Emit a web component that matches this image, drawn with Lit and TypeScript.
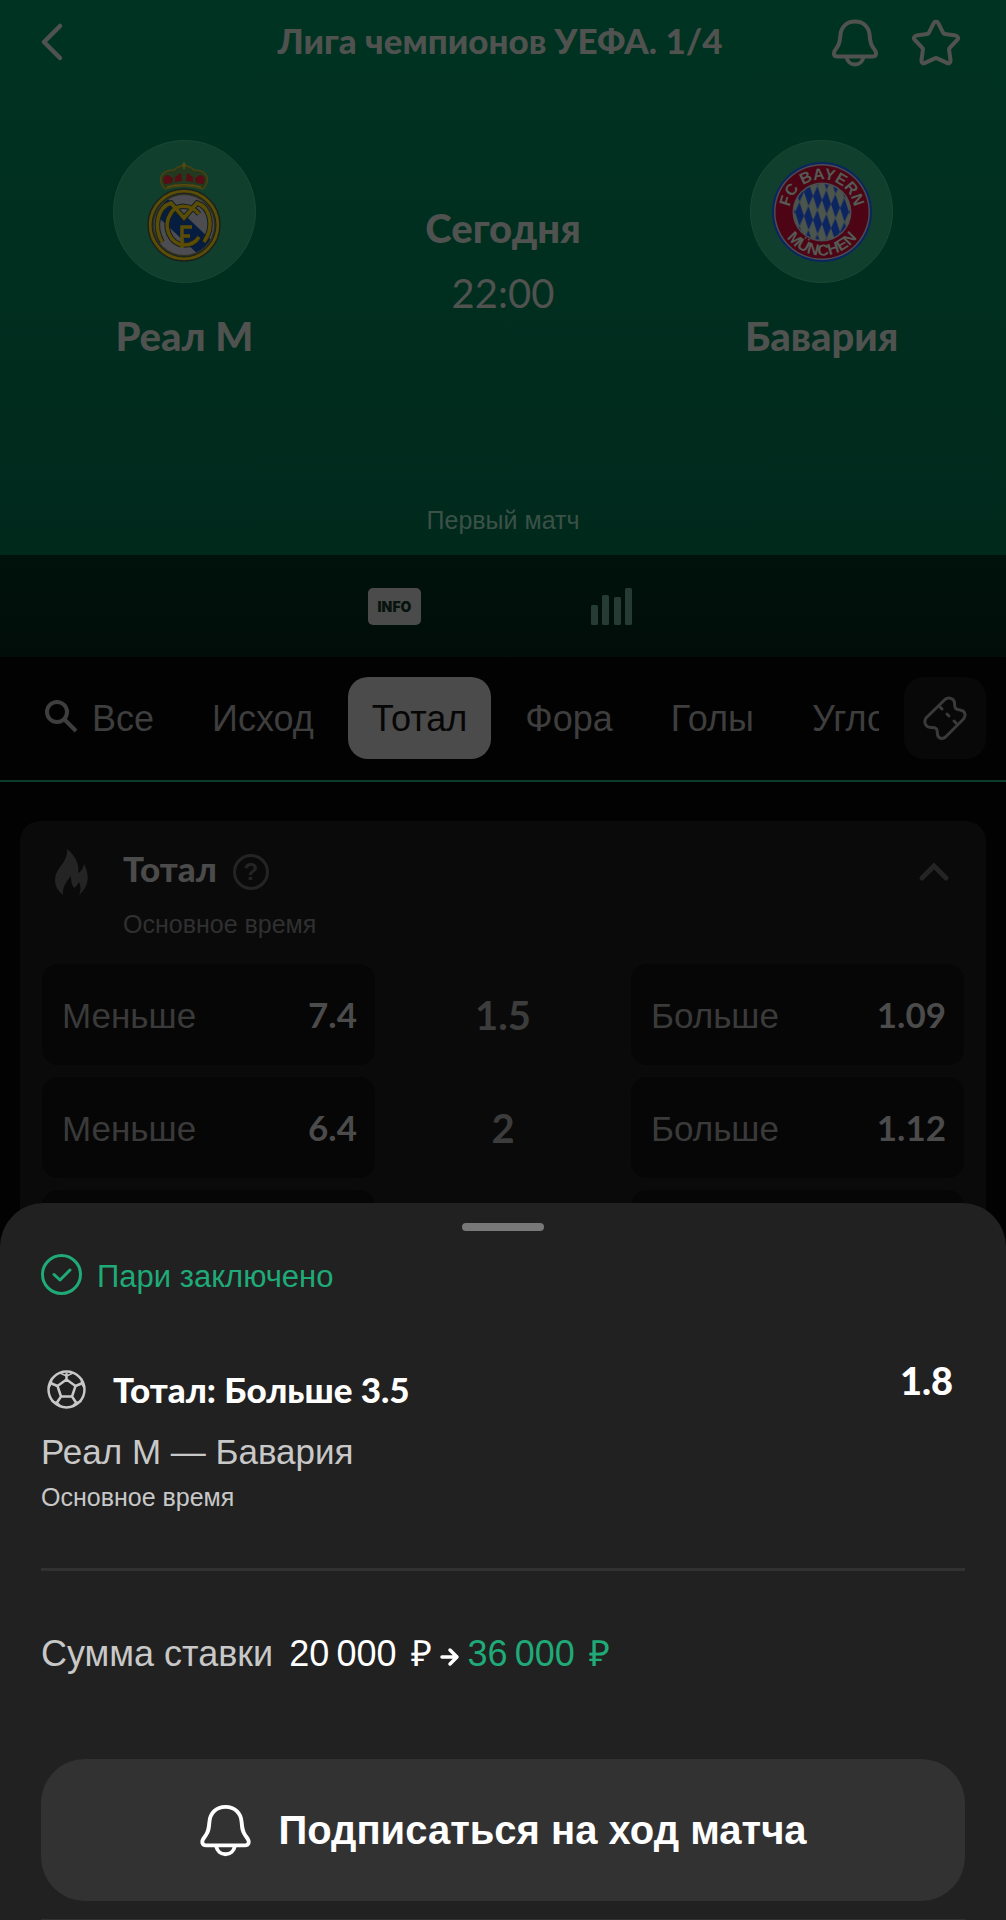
import { LitElement, html, css, svg } from 'lit';
import { customElement, property, state } from 'lit/decorators.js';
import { classMap } from 'lit/directives/class-map.js';

const bell = svg`
  <path d="M24 3.5c-8.6 0-14 5.8-14.6 13.6-.5 6-.7 8.6-3.2 12.1-2 2.8-3.8 4.4-3.2 7 .4 1.6 1.6 2.3 3.4 2.3h35.200c1.8 0 3-.7 3.4-2.3.6-2.6-1.2-4.2-3.2-7-2.5-3.5-2.7-6.1-3.2-12.1C38 9.300 32.600 3.500 24 3.500z"/>
  <path d="M15.500 39c.8 4.300 4 7.500 8.500 7.500s7.700-3.200 8.500-7.500"/>
`;

// герб Реала
@customElement('crest-real')
export class CrestReal extends LitElement {
  static styles = css`
    :host {
      display: block;
    }

    svg {
      display: block;
      width: 76px;
      height: 104px;
    }
  `

  render() {
    return html`
      <svg viewBox="0 0 76 104" fill="none" aria-hidden="true">
        <defs>
          <clipPath id="inner"><circle cx="38" cy="65" r="30"/></clipPath>
        </defs>
        <path d="M19 29c-4-4-6-10-3-14 3-4 9-5 12-5 3-3 6-4 10-4s7 1 10 4c3 0 9 1 12 5 3 4 1 10-3 14-6-2-12-3-19-3s-13 1-19 3z" fill="#22391f" stroke="#4a4110" stroke-width="1.5"/>
        <path d="M19 24c-3-4-2-8 3-9l5 3-1 5zM29 22v-5l6-4 1 8zM40 21l1-8 6 4v5zM50 23l-1-5 5-3c5 1 6 5 3 9z" fill="#560d14"/>
        <path d="M38 2v7M36 5h4M21 27c10-3 24-3 34 0" stroke="#5b4c0d" stroke-width="1.5"/>
        <circle cx="38" cy="65" r="36" fill="#5c4d06" stroke="#1a211c" stroke-width="1.5"/>
        <circle cx="38" cy="65" r="32" fill="#2e2f20" stroke="#1a211c" stroke-width="1"/>
        <circle cx="38" cy="65" r="30" fill="#4c4c51"/>
        <g clip-path="url(#inner)">
          <path d="M10 55l11-17 46 44-13 14z" fill="#061d3f"/>
        </g>
        <g stroke="#15201f" stroke-width="5.500">
          <path d="M16 82C7 66 12 47 25 43l13 15 13-15c13 4 18 23 7 39"/>
          <path d="M53 54C45 44 31 44 25 53c-9 14-1 31 13 32 7 0 12-3 15-8"/>
        </g>
        <g stroke="#5c4d06" stroke-width="3.500">
          <path d="M16 82C7 66 12 47 25 43l13 15 13-15c13 4 18 23 7 39"/>
          <path d="M53 54C45 44 31 44 25 53c-9 14-1 31 13 32 7 0 12-3 15-8"/>
          <path d="M36 88V67h10M36 76h8"/>
        </g>
      </svg>
    `
  }
}

// герб Баварии
@customElement('crest-bayern')
export class CrestBayern extends LitElement {
  static styles = css`
    :host {
      display: block;
    }

    svg {
      display: block;
      width: 102px;
      height: 102px;
    }

    text {
      font: bold 16px 'Liberation Sans', Arial, sans-serif;
      fill: #555a55;
      text-anchor: middle;
    }
  `

  render() {
    return html`
      <svg viewBox="0 0 102 102" aria-hidden="true">
        <defs>
          <pattern id="rhombs" width="9" height="24" patternUnits="userSpaceOnUse" patternTransform="translate(51 51) skewY(24)">
            <rect width="9" height="24" fill="#4c554c"/>
            <path d="M4.500 0L9 12l-4.500 12L0 12z" fill="#0c2460"/>
          </pattern>
          <path id="top-arc" d="M18.500 51a32.500 32.500 0 0 1 65 0"/>
          <path id="bottom-arc" d="M7.500 51a43.500 43.500 0 0 0 87 0"/>
        </defs>
        <circle cx="51" cy="51" r="50" fill="#0b2560"/>
        <circle cx="51" cy="51" r="48" fill="#4c4c51"/>
        <circle cx="51" cy="51" r="46.500" fill="#4d0414"/>
        <circle cx="51" cy="51" r="29.500" fill="#4c4c51"/>
        <circle cx="51" cy="51" r="28" fill="url(#rhombs)"/>
        <text><textPath href="#top-arc" startOffset="50%">FC BAYERN</textPath></text>
        <text><textPath href="#bottom-arc" startOffset="50%">MÜNCHEN</textPath></text>
      </svg>
    `
  }
}

// строка коэффициентов
@customElement('odds-row')
export class OddsRow extends LitElement {
  @property() line = '';
  @property() under = '';
  @property() over = '';

  static styles = css`
    :host {
      display: grid;
      grid-template-columns: 13fr 10fr 13fr;
      align-items: center;
    }

    .odd {
      display: flex;
      align-items: baseline;
      justify-content: space-between;
      height: 101px;
      padding: 0 18px 0 20px;
      border: none;
      border-radius: 16px;
      background-color: #060606;
      color: #3a3a3a;
      font: 35px/101px 'Liberation Sans', Arial, sans-serif;
      cursor: pointer;
    }

    .value {
      color: #4b4b4b;
      font-family: Lato, sans-serif;
      font-weight: 700;
    }

    .line {
      color: #3c3c3c;
      font-family: Lato, sans-serif;
      font-size: 40px;
      font-weight: 700;
      text-align: center;
    }
  `

  render() {
    return html`
      <button class="odd"><span>Меньше</span><span class="value">${this.under}</span></button>
      <span class="line">${this.line}</span>
      <button class="odd"><span>Больше</span><span class="value">${this.over}</span></button>
    `
  }
}

// шторка с заключённым пари
@customElement('bet-sheet')
export class BetSheet extends LitElement {
  static styles = css`
    :host {
      display: flex;
      flex-direction: column;
      box-sizing: border-box;
      padding: 20px 41px 0;
      border-radius: 44px 44px 0 0;
      background-color: #212121;
      color: #c8c8c8;
      font-family: 'Liberation Sans', Arial, sans-serif;
      font-size: 36px;
      line-height: 44px;
    }

    svg {
      display: block;
      flex: none;
      fill: none;
      stroke: currentColor;
      stroke-linecap: round;
      stroke-linejoin: round;
    }

    p,
    h2 {
      margin: 0;
    }

    .handle {
      align-self: center;
      width: 82px;
      height: 8px;
      border-radius: 4px;
      background-color: #787878;
    }

    .status {
      display: flex;
      align-items: center;
      gap: 15px;
      height: 41px;
      margin-top: 23px;
      color: #1faa78;
      font-size: 31px;
    }

    .status span {
      padding-top: 4px;
    }

    .status svg {
      width: 41px;
      height: 41px;
    }

    .head {
      display: flex;
      justify-content: space-between;
      margin-top: 60px;
      padding-right: 12px;
      color: #fff;
      font-family: Lato, sans-serif;
      font-weight: 900;
    }

    .pick {
      display: flex;
      align-items: center;
      gap: 27px;
      padding: 12px 0 0 6px;
    }

    .pick svg {
      width: 39px;
      height: 39px;
      color: #c8c8c8;
    }

    .pick h2 {
      font-size: 35px;
      font-weight: 900;
    }

    .coef {
      font-size: 38px;
      line-height: 50px;
    }

    .teams {
      margin-top: 19px;
      font-size: 35px;
    }

    .period {
      margin-top: 7px;
      font-size: 25px;
      line-height: 32px;
    }

    .divider {
      width: 100%;
      height: 3px;
      margin: 55px 0 0;
      border: none;
      background-color: #323232;
    }

    .stake {
      display: flex;
      align-items: center;
      margin-top: 61px;
      gap: 8px;
      color: #fff;
    }

    .stake .label {
      margin-right: 8px;
      color: #c8c8c8;
    }

    .stake .win {
      color: #1faa78;
    }

    .ruble {
      margin-left: 4px;
    }

    .stake svg {
      width: 20px;
      height: 20px;
      margin-top: 6px;
    }

    .subscribe {
      display: flex;
      align-items: center;
      justify-content: center;
      gap: 26px;
      height: 142px;
      margin-top: 83px;
      padding: 0;
      border: none;
      border-radius: 44px;
      background-color: #323232;
      color: #fff;
      font: bold 40px 'Liberation Sans', Arial, sans-serif;
      cursor: pointer;
    }

    .subscribe svg {
      width: 53px;
      height: 54px;
    }

    .next {
      height: 1px;
      margin-top: 18px;
    }
  `

  render() {
    return html`
      <div class="handle"></div>
      <div class="status">
        <svg viewBox="0 0 41 41" stroke-width="3">
          <circle cx="20.500" cy="20.500" r="19"/>
          <path d="M13 20.500l6 5.500 10-10"/>
        </svg>
        <span>Пари заключено</span>
      </div>
      <div class="head">
        <div class="pick">
          <svg viewBox="0 0 39 39" stroke-width="2.500">
            <circle cx="19.500" cy="19.500" r="18"/>
            <path d="M19.500 9.500l9 6.500-3.500 10.500H14L10.500 16zM19.500 9.500V4M28.500 16l6-2.500M25 26.500l4 6M14 26.500l-4 6M10.500 16l-6-2.500"/>
            <path d="M13 3l6.500 3L26 3M36.500 17l-2-3.500 0-5M2.500 17l2-3.500 0-5M25 36l4-3.500 5-1M14 36l-4-3.500-5-1" stroke-width="1.500"/>
          </svg>
          <h2>Тотал: Больше 3.5</h2>
        </div>
        <span class="coef">1.8</span>
      </div>
      <p class="teams">Реал М — Бавария</p>
      <p class="period">Основное время</p>
      <hr class="divider">
      <div class="stake">
        <span class="label">Сумма ставки</span>
        <span>20&thinsp;000 <span class="ruble">₽</span></span>
        <svg viewBox="0 0 20 20" stroke-width="3.500">
          <path d="M2 10h15M10 3l7 7-7 7"/>
        </svg>
        <span class="win">36&thinsp;000 <span class="ruble">₽</span></span>
      </div>
      <button class="subscribe">
        <svg viewBox="0 0 48 49" stroke-width="3.500">${bell}</svg>
        <span>Подписаться на ход матча</span>
      </button>
      <hr class="divider next">
    `
  }
}

@customElement('app-root')
export class AppRoot extends LitElement {
  @state() private active = 'Тотал';

  private tabs = ['Все', 'Исход', 'Тотал', 'Фора', 'Голы', 'Угловые'];

  private odds = [
    { line: '1.5', under: '7.4', over: '1.09' },
    { line: '2', under: '6.4', over: '1.12' },
    { line: '2.5', under: '4.2', over: '1.25' },
  ];

  static styles = css`
    :host {
      display: block;
      position: relative;
      min-height: 100vh;
      overflow: hidden;
      background-color: #020202;
      color: #505250;
      font-family: 'Liberation Sans', Arial, sans-serif;
    }

    button {
      padding: 0;
      border: none;
      background: none;
      color: inherit;
      font: inherit;
      cursor: pointer;
    }

    svg {
      display: block;
      flex: none;
      fill: none;
      stroke: currentColor;
      stroke-linecap: round;
      stroke-linejoin: round;
    }

    h1,
    h2,
    p {
      margin: 0;
    }

    .hero {
      padding-bottom: 19px;
      background: linear-gradient(#003322, #00291c);
    }

    .topbar {
      display: grid;
      grid-template-columns: 1fr auto 1fr;
      align-items: center;
      height: 84px;
      padding: 0 46px 0 40px;
    }

    .topbar h1 {
      padding-bottom: 4px;
      font: 900 35px/44px Lato, sans-serif;
    }

    .back svg {
      width: 24px;
      height: 40px;
    }

    .actions {
      display: flex;
      justify-content: flex-end;
      gap: 33px;
    }

    .actions svg {
      width: 48px;
      height: 49px;
    }

    .match {
      display: grid;
      grid-template-columns: repeat(3, 1fr);
      padding: 56px 25px 0;
      font: 900 40px/48px Lato, sans-serif;
      text-align: center;
    }

    .team {
      display: flex;
      flex-direction: column;
      align-items: center;
      gap: 29px;
    }

    .logo {
      display: flex;
      align-items: center;
      justify-content: center;
      box-sizing: border-box;
      width: 143px;
      height: 143px;
      border: 1px solid #174836;
      border-radius: 50%;
      background-color: #113f2e;
    }

    .when {
      display: flex;
      flex-direction: column;
      gap: 17px;
      padding-top: 64px;
    }

    .time {
      font-weight: 400;
    }

    .leg {
      margin-top: 144px;
      color: #3b5148;
      font-size: 25px;
      line-height: 32px;
      text-align: center;
    }

    .media {
      display: flex;
      justify-content: center;
      height: 102px;
      background: linear-gradient(#00120c, #010d09);
    }

    .media button {
      display: flex;
      align-items: center;
      justify-content: center;
      width: 217px;
    }

    .info {
      padding: 0 10px;
      border-radius: 5px;
      background-color: #4b4b4b;
      color: #07130e;
      font: 900 14px/37px Inter, sans-serif;
    }

    .bars {
      width: 42px;
      height: 37px;
      fill: #263b33;
      stroke: none;
    }

    .filters {
      display: flex;
      gap: 25px;
      padding: 20px 20px 21px;
      border-bottom: 2px solid #0b3b29;
    }

    .tabs {
      display: flex;
      flex: 1;
      gap: 10px;
      min-width: 0;
      overflow: hidden;
    }

    .tab {
      display: flex;
      flex: none;
      align-items: center;
      height: 82px;
      padding: 2px 24px 0;
      border-radius: 20px;
      color: #3e3e3e;
      font-size: 36px;
    }

    .tab.active {
      background-color: #4b4b4b;
      color: #060606;
    }

    .tab svg {
      width: 34px;
      height: 34px;
      margin: 0 14px 6px 0;
      stroke-linecap: butt;
    }

    .ticket {
      display: flex;
      align-items: center;
      justify-content: center;
      width: 82px;
      height: 82px;
      border-radius: 20px;
      background-color: #080808;
      color: #3a3a3a;
    }

    .ticket svg {
      width: 44px;
      height: 44px;
    }

    .card {
      margin: 39px 20px 0;
      padding: 24px 22px;
      border-radius: 20px;
      background-color: #0a0a0a;
    }

    .card-head {
      display: flex;
      align-items: center;
      gap: 16px;
      height: 54px;
      padding-right: 14px;
    }

    .card-head h2 {
      margin-left: 19px;
      padding-bottom: 8px;
      color: #4b4b4b;
      font: 900 35px/44px Lato, sans-serif;
    }

    .fire {
      width: 33px;
      height: 47px;
      margin-left: 13px;
      fill: #242424;
      stroke: none;
    }

    .help {
      box-sizing: border-box;
      width: 36px;
      height: 36px;
      border: 3px solid #242424;
      border-radius: 50%;
      color: #242424;
      font: bold 24px/30px 'Liberation Sans', Arial, sans-serif;
    }

    .toggle {
      margin-left: auto;
      color: #242424;
    }

    .toggle svg {
      width: 32px;
      height: 22px;
    }

    .card .period {
      margin: 9px 0 24px 81px;
      color: #303030;
      font-size: 25px;
      line-height: 32px;
    }

    .rows {
      display: flex;
      flex-direction: column;
      gap: 12px;
    }

    .sheet {
      position: absolute;
      right: 0;
      bottom: 0;
      left: 0;
    }
  `

  private renderTab(name: string) {
    return html`
      <button
        class=${classMap({ tab: true, active: name === this.active })}
        @click=${() => (this.active = name)}
      >
        ${name === 'Все'
          ? html`<svg viewBox="0 0 34 34" stroke-width="4"><circle cx="13" cy="13" r="10"/><path d="M20 20l12 12"/></svg>`
          : ''}
        ${name}
      </button>
    `
  }

  render() {
    return html`
      <header class="hero">
        <div class="topbar">
          <button class="back" aria-label="Назад">
            <svg viewBox="0 0 24 40" stroke-width="4.500"><path d="M20 4L4 20l16 16"/></svg>
          </button>
          <h1>Лига чемпионов УЕФА. 1/4</h1>
          <div class="actions">
            <button aria-label="Уведомления">
              <svg viewBox="0 0 48 49" stroke-width="4">${bell}</svg>
            </button>
            <button aria-label="В избранное">
              <svg viewBox="0 0 48 48" stroke-width="4">
                <path d="M21.800 4.500c1-2 3.400-2 4.400 0l5 9.800c.3.700.9 1.100 1.700 1.200l10.900 1.600c2.200.4 3 2.700 1.400 4.300l-7.500 8c-.5.5-.7 1.200-.6 1.900l1.400 10.400c.4 2.300-1.600 3.700-3.600 2.700l-9.700-4.500c-.8-.4-1.600-.4-2.400 0l-9.700 4.500c-2 1-4-.4-3.600-2.700l1.400-10.400c.1-.7-.1-1.400-.6-1.900l-7.500-8c-1.600-1.600-.8-3.900 1.400-4.300l10.900-1.600c.8-.1 1.400-.5 1.700-1.200z"/>
              </svg>
            </button>
          </div>
        </div>
        <div class="match">
          <div class="team">
            <div class="logo"><crest-real></crest-real></div>
            <span>Реал М</span>
          </div>
          <div class="when">
            <span>Сегодня</span>
            <span class="time">22:00</span>
          </div>
          <div class="team">
            <div class="logo"><crest-bayern></crest-bayern></div>
            <span>Бавария</span>
          </div>
        </div>
        <p class="leg">Первый матч</p>
      </header>

      <div class="media">
        <button><span class="info">INFO</span></button>
        <button aria-label="Статистика">
          <svg class="bars" viewBox="0 0 42 37">
            <rect x="0" y="17" width="7" height="20" rx="1.500"/>
            <rect x="11" y="7" width="7" height="30" rx="1.500"/>
            <rect x="23" y="9" width="7" height="28" rx="1.500"/>
            <rect x="34" y="0" width="7" height="37" rx="1.500"/>
          </svg>
        </button>
      </div>

      <nav class="filters">
        <div class="tabs">${this.tabs.map((name) => this.renderTab(name))}</div>
        <button class="ticket" aria-label="Купон">
          <svg viewBox="0 0 44 44" stroke-width="3">
            <path d="M3 22L22 3.500c3-2.500 9-1.500 9.500 3 .3 4-.5 7 5.500 7.500 5 .5 6.500 5 3.500 9L22.500 41c-3 2.500-7.500 1.500-8-2.500-.5-4.500 0-7-5-7-6 .5-9.500-4-6.500-9.500z"/>
            <path d="M17 11l2 2M24 18l2 2M31 25l2 2"/>
          </svg>
        </button>
      </nav>

      <section class="card">
        <div class="card-head">
          <svg class="fire" viewBox="0 0 33 47">
            <path d="M12 0c8 6 13 16 11 24 4-2 5-5 6-9 6 12 5 22-5 31 2-5 2-9 0-13-2 3-3 5-5 6-3-4-3-8-3-12-4 5-9 11-8 19-9-7-10-17-5-25C7 15 13 9 12 0z"/>
          </svg>
          <h2>Тотал</h2>
          <button class="help" aria-label="Справка">?</button>
          <button class="toggle" aria-label="Свернуть">
            <svg viewBox="0 0 32 22" stroke-width="5"><path d="M4 17L16 5l12 12" stroke-linejoin="miter"/></svg>
          </button>
        </div>
        <p class="period">Основное время</p>
        <div class="rows">
          ${this.odds.map(
            (o) => html`<odds-row .line=${o.line} .under=${o.under} .over=${o.over}></odds-row>`
          )}
        </div>
      </section>

      <bet-sheet class="sheet"></bet-sheet>
    `
  }
}
